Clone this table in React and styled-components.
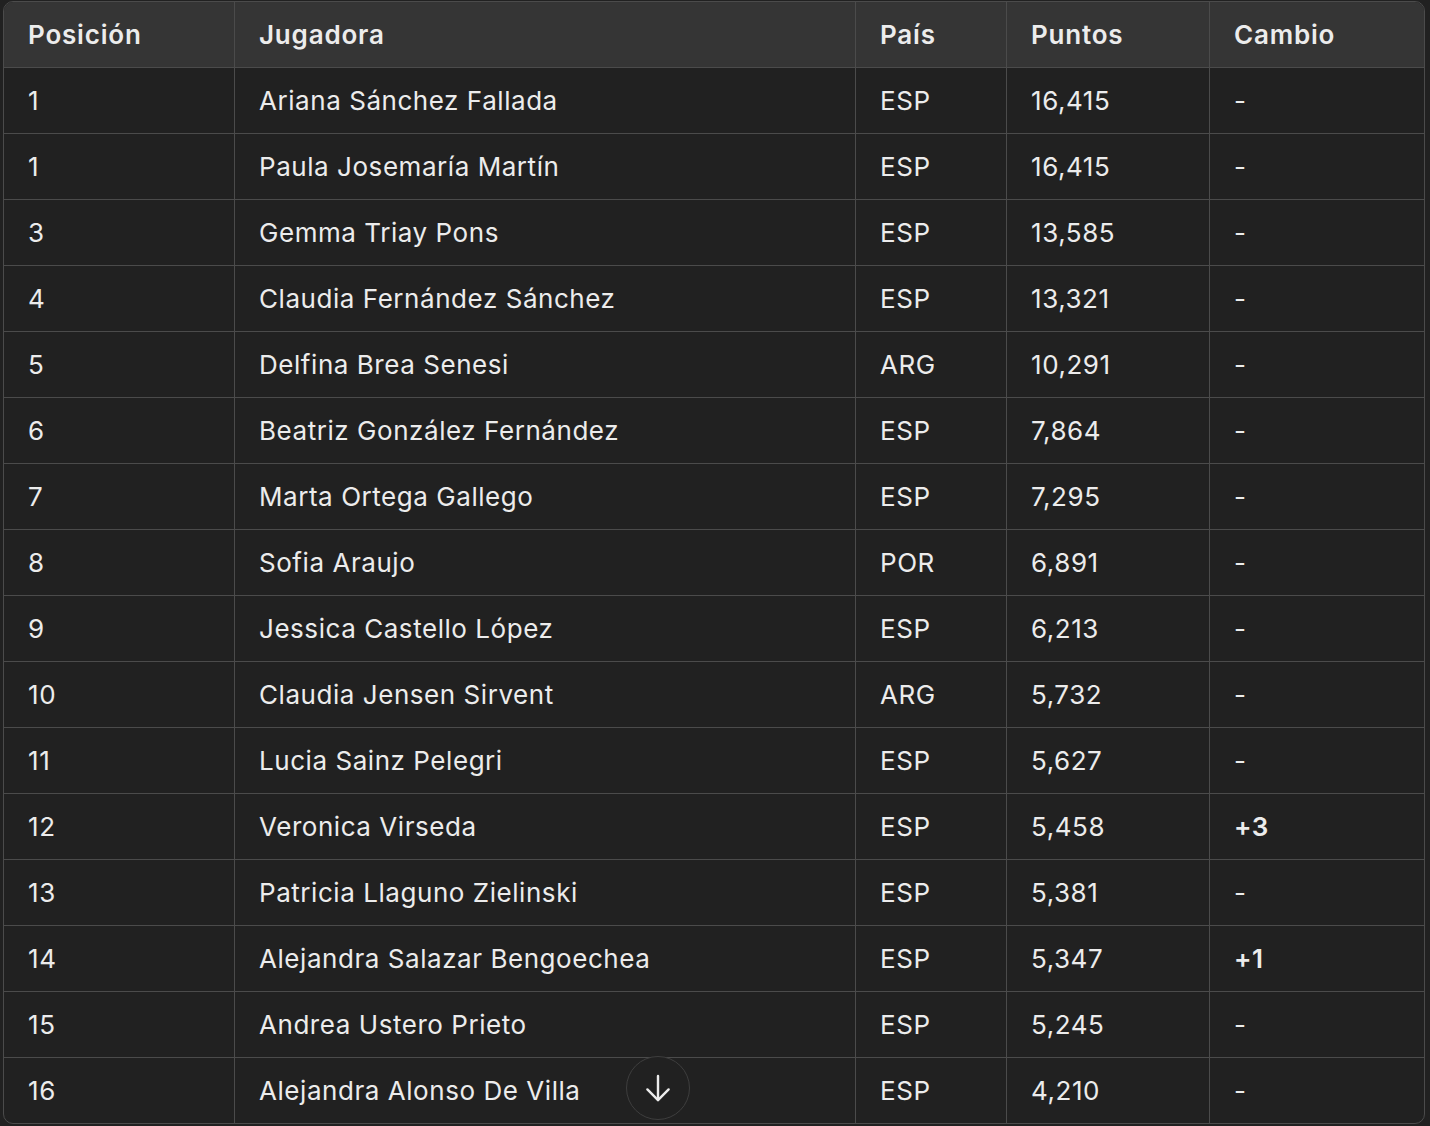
import React from "react";
import styled, { createGlobalStyle } from "styled-components";

const rows = [
  ["1", "Ariana Sánchez Fallada", "ESP", "16,415", "-"],
  ["1", "Paula Josemaría Martín", "ESP", "16,415", "-"],
  ["3", "Gemma Triay Pons", "ESP", "13,585", "-"],
  ["4", "Claudia Fernández Sánchez", "ESP", "13,321", "-"],
  ["5", "Delfina Brea Senesi", "ARG", "10,291", "-"],
  ["6", "Beatriz González Fernández", "ESP", "7,864", "-"],
  ["7", "Marta Ortega Gallego", "ESP", "7,295", "-"],
  ["8", "Sofia Araujo", "POR", "6,891", "-"],
  ["9", "Jessica Castello López", "ESP", "6,213", "-"],
  ["10", "Claudia Jensen Sirvent", "ARG", "5,732", "-"],
  ["11", "Lucia Sainz Pelegri", "ESP", "5,627", "-"],
  ["12", "Veronica Virseda", "ESP", "5,458", "+3"],
  ["13", "Patricia Llaguno Zielinski", "ESP", "5,381", "-"],
  ["14", "Alejandra Salazar Bengoechea", "ESP", "5,347", "+1"],
  ["15", "Andrea Ustero Prieto", "ESP", "5,245", "-"],
  ["16", "Alejandra Alonso De Villa", "ESP", "4,210", "-"],
];

const headers = ["Posición", "Jugadora", "País", "Puntos", "Cambio"];
const widths = [231, 621, 151, 203, 214];

function App() {
  return (
    <>
      <GlobalStyle />
      <Page>
        <TableWrap>
          <Table>
            <colgroup>
              {widths.map((w, i) => (
                <col key={i} style={{ width: w }} />
              ))}
            </colgroup>
            <thead>
              <tr>
                {headers.map((h) => (
                  <Th key={h}>{h}</Th>
                ))}
              </tr>
            </thead>
            <tbody>
              {rows.map((r, i) => (
                <Row key={i} $last={i === rows.length - 1}>
                  {r.map((c, j) => (
                    <Td key={j} $strong={j === 4 && c !== "-"}>
                      {c}
                    </Td>
                  ))}
                </Row>
              ))}
            </tbody>
          </Table>
          <ScrollButton aria-label="Bajar">
            <svg width="34" height="34" viewBox="0 0 24 24" fill="none" stroke="#ececec" strokeWidth="1.7" strokeLinecap="round" strokeLinejoin="round">
              <path d="M12 3.5v17" />
              <path d="M4.5 13 12 20.5 19.5 13" />
            </svg>
          </ScrollButton>
        </TableWrap>
      </Page>
    </>
  );
}

export default App;

const GlobalStyle = createGlobalStyle`
  html, body {
    margin: 0;
    padding: 0;
    background: #212121;
  }
  body {
    font-family: Inter, "Noto Sans", "Liberation Sans", sans-serif;
    color: #ececec;
  }
`;

const Page = styled.div`
  padding: 1px 5px 3px 3px;
`;

const TableWrap = styled.div`
  position: relative;
  border: 1px solid #4b4b4b;
  border-radius: 10px;
  overflow: hidden;
  background: #212121;
`;

const Table = styled.table`
  width: 100%;
  table-layout: fixed;
  border-collapse: separate;
  border-spacing: 0;
`;

const Th = styled.th`
  height: 65px;
  padding: 0 0 0 24px;
  text-align: left;
  font-size: 26px;
  font-weight: 600;
  letter-spacing: 0.8px;
  background: #353535;
  border-bottom: 1px solid #4b4b4b;
  border-right: 1px solid #4b4b4b;
  &:last-child {
    border-right: none;
  }
`;

const Row = styled.tr`
  td {
    border-bottom: ${(p) => (p.$last ? "none" : "1px solid #4b4b4b")};
  }
`;

const Td = styled.td`
  height: 65px;
  padding: 0 0 0 24px;
  font-size: 26px;
  font-weight: ${(p) => (p.$strong ? 600 : 400)};
  letter-spacing: 0.55px;
  border-right: 1px solid #4b4b4b;
  white-space: nowrap;
  &:last-child {
    border-right: none;
  }
`;

const ScrollButton = styled.button`
  position: absolute;
  left: 622px;
  top: 1054px;
  width: 64px;
  height: 64px;
  border-radius: 50%;
  border: 1px solid #3e3e3e;
  background: #212121;
  display: flex;
  align-items: center;
  justify-content: center;
  padding: 0;
  cursor: pointer;
`;
